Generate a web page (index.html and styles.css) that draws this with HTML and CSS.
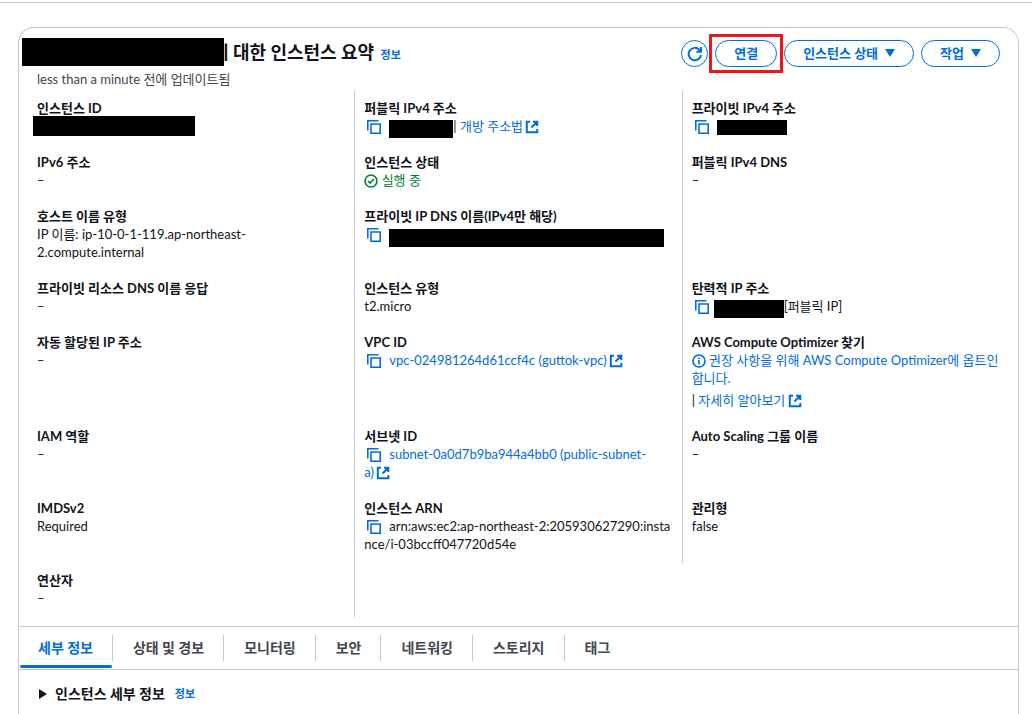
FILE: index.html
```html
<!DOCTYPE html>
<html lang="ko">
<head>
   <meta charset="utf-8">
   <meta name="viewport" content="width=device-width, initial-scale=1">
   <title>인스턴스 요약</title>
   <link rel="stylesheet" href="styles.css">
</head>
<body>
   <!-- shared icons -->
   <svg class="icon-defs" aria-hidden="true">
      <symbol id="copy" viewBox="0 0 14 14">
         <path d="M.8 10.500V.8h10.700M4 4h9.200v9.200H4z"/>
      </symbol>
      <symbol id="external" viewBox="0 0 14 14">
         <path d="M5 1.800H1.800v10.500h10.500V9M8 1.800h4.300V6M12 2L6.500 7.500"/>
      </symbol>
      <symbol id="refresh" viewBox="0 0 16 16">
         <path d="M14 9A6.200 6.200 0 1 1 12.300 3.700L14 5.500M14 1v4.700H9.500"/>
      </symbol>
      <symbol id="check" viewBox="0 0 14 14">
         <circle cx="7" cy="7" r="6"/><path d="M4 7l2 2 4-4"/>
      </symbol>
      <symbol id="info" viewBox="0 0 14 14">
         <circle cx="7" cy="7" r="6"/><path d="M7 6v4.500M7 3.500v1.500"/>
      </symbol>
   </svg>

   <main class="card">
      <header class="card-header">
         <div>
            <h1 class="title"><span class="mask mask-title"></span>에 대한 인스턴스 요약 <a class="info-link" href="#">정보</a></h1>
            <p class="updated">less than a minute 전에 업데이트됨</p>
         </div>
         <div class="actions">
            <button class="btn btn-round" aria-label="새로 고침"><svg class="icon icon-lg"><use href="#refresh"/></svg></button>
            <span class="highlight"><button class="btn">연결</button></span>
            <button class="btn">인스턴스 상태 <span class="caret"></span></button>
            <button class="btn">작업 <span class="caret"></span></button>
         </div>
      </header>

      <dl class="summary">
         <div class="item">
            <dt>인스턴스 ID</dt>
            <dd><span class="mask mask-id"></span></dd>
         </div>
         <div class="item">
            <dt>퍼블릭 IPv4 주소</dt>
            <dd><button class="copy" aria-label="복사"><svg class="icon"><use href="#copy"/></svg></button><span class="mask mask-ip"></span>| <a href="#">개방 주소법 <svg class="icon icon-link"><use href="#external"/></svg></a></dd>
         </div>
         <div class="item">
            <dt>프라이빗 IPv4 주소</dt>
            <dd><button class="copy" aria-label="복사"><svg class="icon"><use href="#copy"/></svg></button><span class="mask mask-private"></span></dd>
         </div>

         <div class="item">
            <dt>IPv6 주소</dt>
            <dd>–</dd>
         </div>
         <div class="item">
            <dt>인스턴스 상태</dt>
            <dd class="running"><svg class="icon"><use href="#check"/></svg> 실행 중</dd>
         </div>
         <div class="item">
            <dt>퍼블릭 IPv4 DNS</dt>
            <dd>–</dd>
         </div>

         <div class="item">
            <dt>호스트 이름 유형</dt>
            <dd>IP 이름: ip-10-0-1-119.ap-northeast-<wbr><span class="nowrap">2.compute.internal</span></dd>
         </div>
         <div class="item">
            <dt>프라이빗 IP DNS 이름(IPv4만 해당)</dt>
            <dd><button class="copy" aria-label="복사"><svg class="icon"><use href="#copy"/></svg></button><span class="mask mask-dns"></span></dd>
         </div>
         <div class="item"></div>

         <div class="item">
            <dt>프라이빗 리소스 DNS 이름 응답</dt>
            <dd>–</dd>
         </div>
         <div class="item">
            <dt>인스턴스 유형</dt>
            <dd>t2.micro</dd>
         </div>
         <div class="item">
            <dt>탄력적 IP 주소</dt>
            <dd><button class="copy" aria-label="복사"><svg class="icon"><use href="#copy"/></svg></button><span class="mask mask-elastic"></span>[퍼블릭 IP]</dd>
         </div>

         <div class="item">
            <dt>자동 할당된 IP 주소</dt>
            <dd>–</dd>
         </div>
         <div class="item">
            <dt>VPC ID</dt>
            <dd><button class="copy" aria-label="복사"><svg class="icon"><use href="#copy"/></svg></button><a href="#">vpc-024981264d61ccf4c (guttok-vpc) <svg class="icon icon-link"><use href="#external"/></svg></a></dd>
         </div>
         <div class="item">
            <dt>AWS Compute Optimizer 찾기</dt>
            <dd>
               <a href="#"><svg class="icon"><use href="#info"/></svg> 권장 사항을 위해 AWS Compute Optimizer에 옵트인<wbr>합니다.</a>
               <div class="learn">| <a href="#">자세히 알아보기 <svg class="icon icon-link"><use href="#external"/></svg></a></div>
            </dd>
         </div>

         <div class="item">
            <dt>IAM 역할</dt>
            <dd>–</dd>
         </div>
         <div class="item">
            <dt>서브넷 ID</dt>
            <dd><button class="copy" aria-label="복사"><svg class="icon"><use href="#copy"/></svg></button><a href="#">subnet-0a0d7b9ba944a4bb0 (public-subnet-<br>a) <svg class="icon icon-link"><use href="#external"/></svg></a></dd>
         </div>
         <div class="item">
            <dt>Auto Scaling 그룹 이름</dt>
            <dd>–</dd>
         </div>

         <div class="item">
            <dt>IMDSv2</dt>
            <dd>Required</dd>
         </div>
         <div class="item">
            <dt>인스턴스 ARN</dt>
            <dd class="arn"><button class="copy" aria-label="복사"><svg class="icon"><use href="#copy"/></svg></button>arn:aws:ec2:ap-northeast-2:205930627290:instance/i-03bccff047720d54e</dd>
         </div>
         <div class="item">
            <dt>관리형</dt>
            <dd>false</dd>
         </div>

         <div class="item">
            <dt>연산자</dt>
            <dd>–</dd>
         </div>
         <div class="item"></div>
      </dl>

      <nav class="tabs">
         <a class="tab tab-active" href="#">세부 정보</a>
         <a class="tab" href="#">상태 및 경보</a>
         <a class="tab" href="#">모니터링</a>
         <a class="tab" href="#">보안</a>
         <a class="tab" href="#">네트워킹</a>
         <a class="tab" href="#">스토리지</a>
         <a class="tab" href="#">태그</a>
      </nav>

      <section class="details">
         <button class="toggle"><span class="arrow"></span>인스턴스 세부 정보</button>
         <a class="info-link" href="#">정보</a>
      </section>
   </main>
</body>
</html>
```
FILE: styles.css
```css
* {
   box-sizing: border-box;
}
body {
   margin: 0;
   padding: 2px 13px 0 18px;
   min-height: 100vh;
   display: flex;
   flex-direction: column;
   background: linear-gradient(#c6c6cd, #c6c6cd) 0 2px / 100% 1px no-repeat white;
   color: #0f141a;
   font-family: Lato, "Noto Sans CJK KR", sans-serif;
   font-size: 13px;
   line-height: 18px;
}
h1, p, dl, dd {
   margin: 0;
}
a {
   color: #006ce0;
   text-decoration: none;
}
button {
   font: inherit;
   cursor: pointer;
}
.icon-defs {
   display: none;
}
.icon {
   width: 14px;
   height: 14px;
   vertical-align: -3px;
   fill: none;
   stroke: currentColor;
   stroke-width: 1.6;
}
.icon-link {
   margin-left: -1px;
   stroke-width: 2;
}
.icon-lg {
   width: 16px;
   height: 16px;
   stroke-width: 2;
}
.card {
   flex: 1;
   margin-top: 25px;
   border: 1px solid #c6c6cd;
   border-bottom: 0;
   border-radius: 16px 16px 0 0;
}
.card-header {
   display: flex;
   justify-content: space-between;
   padding: 12px 18px 3px 18px;
}
.title {
   height: 24px;
   font-size: 18px;
   line-height: 24px;
   font-weight: 700;
}
.info-link {
   margin-left: 2px;
   font-size: 11px;
   font-weight: 700;
}
.updated {
   margin-top: 6px;
   color: #424650;
}
.actions {
   display: flex;
   align-items: flex-start;
   gap: 7px;
}
.btn {
   display: flex;
   align-items: center;
   gap: 7px;
   height: 27px;
   padding: 0 18px 2px;
   border: 1px solid #006ce0;
   border-radius: 14px;
   background: white;
   color: #006ce0;
   font-size: 13px;
   font-weight: 700;
}
.btn-round {
   width: 27px;
   padding: 0;
   justify-content: center;
}
.caret {
   border: 5px solid transparent;
   border-top: 8px solid #006ce0;
   border-bottom: 0;
}
/* red frame around the connect button */
.highlight {
   outline: 3px solid #e8191c;
   outline-offset: 3px;
}
/* blacked out values */
.mask {
   display: inline-block;
   position: relative;
   height: 18px;
   background: black;
   vertical-align: top;
}
.mask-title {
   width: 202px;
   height: 28px;
   margin: -2px -12px 0 -15px;
}
.mask-id {
   width: 162px;
   height: 20px;
   margin: -1px 0 -1px -4px;
}
.mask-ip {
   width: 64px;
   margin: 3px 0 -3px;
}
.mask-private {
   width: 70px;
   height: 15px;
   margin-top: 3px;
}
.mask-elastic {
   width: 70px;
   margin: 3px 0 -3px -3px;
}
.mask-dns {
   width: 275px;
   margin: 4px 0 -4px;
}
.summary {
   display: grid;
   grid-template-columns: repeat(3, 1fr);
   margin: 0 9px 9px 8px;
}
.item {
   padding: 8px 8px 10px 9px;
   border-left: 1px solid #c6c6cd;
}
.item:nth-child(3n + 1) {
   border-left-color: transparent;
}
dt {
   font-weight: 700;
}
.copy {
   padding: 0;
   margin: 0 8px 0 3px;
   border: 0;
   background: none;
   color: #006ce0;
   line-height: 14px;
}
.running {
   color: #00802f;
}
.nowrap {
   white-space: nowrap;
}
.arn {
   word-break: break-all;
}
.learn {
   margin-top: 4px;
}
.tabs {
   display: flex;
   align-items: center;
   height: 44px;
   border-top: 1px solid #c6c6cd;
   border-bottom: 1px solid #c6c6cd;
}
.tab {
   padding: 4px 19px 4px 20px;
   border-right: 1px solid #c6c6cd;
   color: #424650;
   font-size: 14px;
   font-weight: 700;
}
.tab:last-child {
   border-right: 0;
}
.tab-active {
   position: relative;
   padding-left: 19px;
   color: #006ce0;
}
.tab-active::after {
   content: "";
   position: absolute;
   left: 1px;
   right: 0;
   bottom: -7px;
   height: 3px;
   border-radius: 2px;
   background: #006ce0;
}
.details {
   display: flex;
   align-items: center;
   gap: 8px;
   padding: 15px 18px;
}
.toggle {
   display: flex;
   align-items: center;
   gap: 8px;
   padding: 0;
   border: 0;
   background: none;
   color: #0f141a;
   font-size: 14px;
   font-weight: 700;
}
.arrow {
   margin-left: 2px;
   border: 5px solid transparent;
   border-left: 8px solid #0f141a;
   border-right: 0;
}
```
